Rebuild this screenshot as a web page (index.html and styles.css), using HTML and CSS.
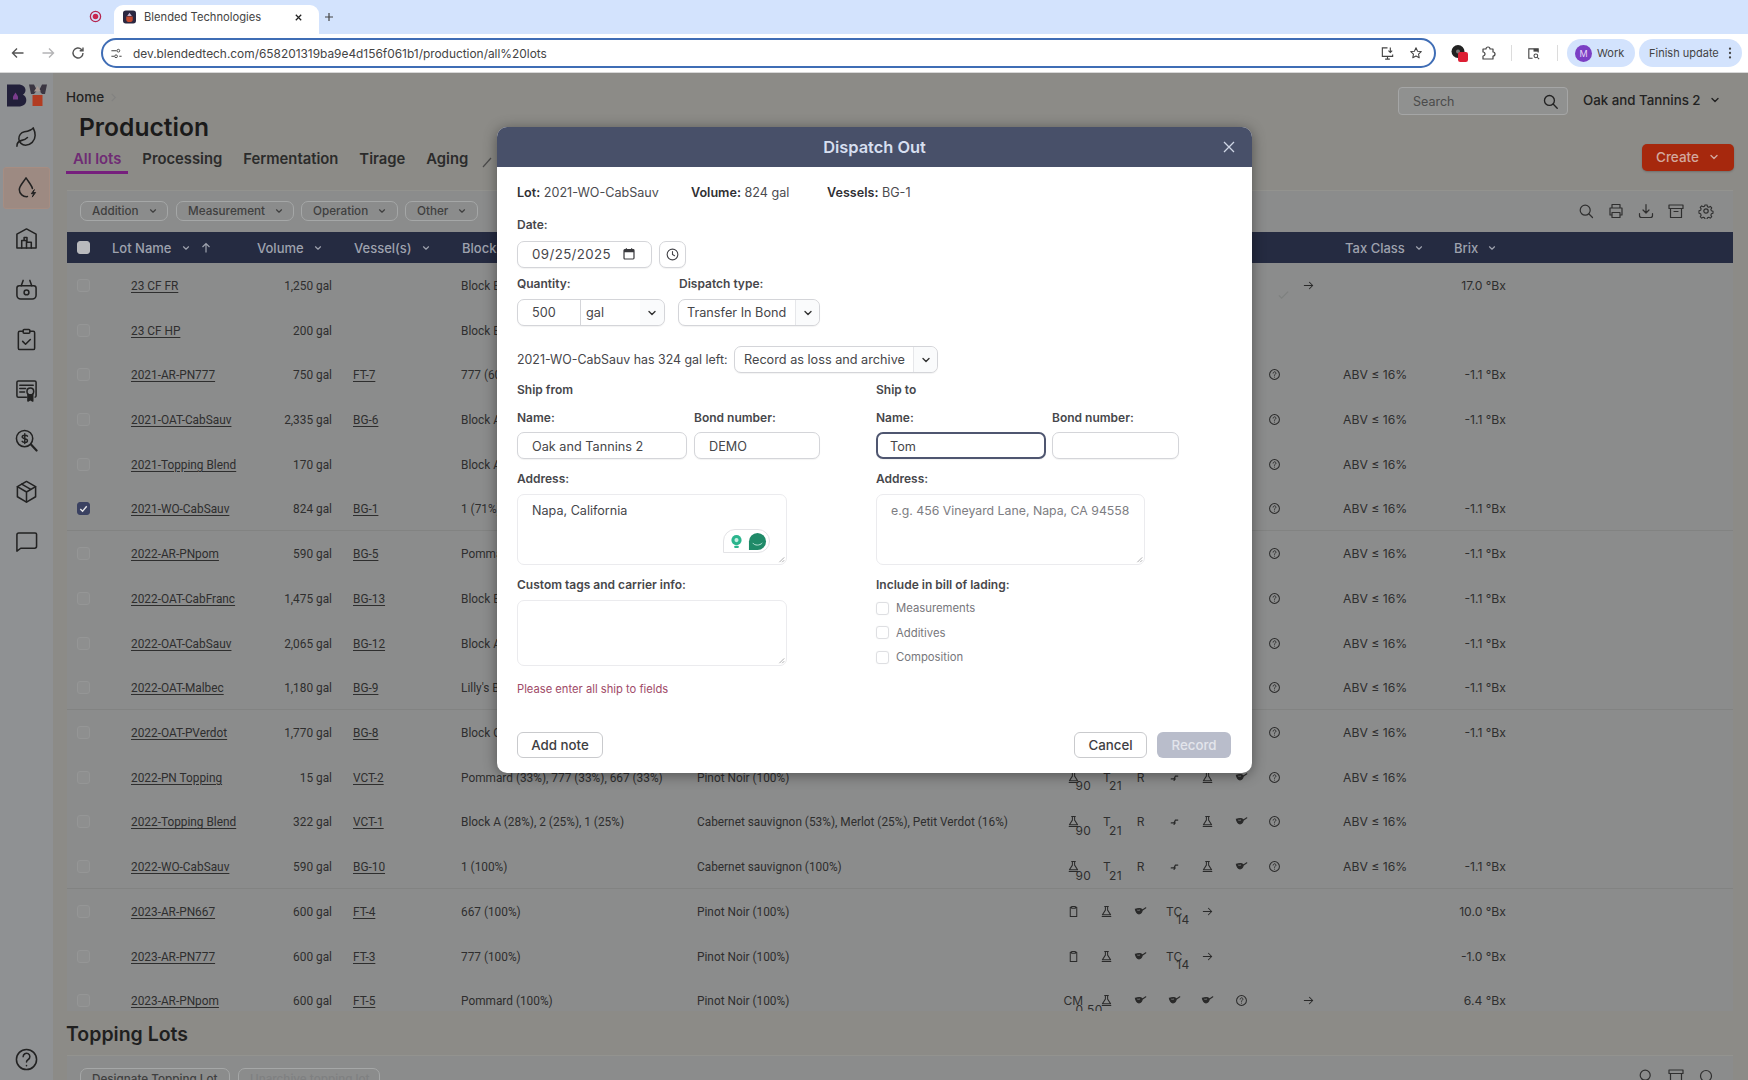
FILE: index.html
```html
<!DOCTYPE html>
<html lang="en">
<head>
<meta charset="utf-8">
<title>Blended Technologies</title>
<link rel="stylesheet" href="styles.css">
</head>
<body>
<svg class="defs" width="0" height="0" aria-hidden="true">
  <symbol id="i-chev" viewBox="0 0 12 12"><path d="M3 4.5 6 7.5 9 4.5" fill="none" stroke="currentColor" stroke-width="1.4" stroke-linecap="round" stroke-linejoin="round"/></symbol>
  <symbol id="i-flask" viewBox="0 0 14 14"><path d="M5 1.500h4M5.800 1.500v4L2.600 10.600h8.800L8.200 5.500v-4M2.300 12.500h9.400" fill="none" stroke="currentColor" stroke-width="1.100" stroke-linecap="round" stroke-linejoin="round"/></symbol>
  <symbol id="i-spoon" viewBox="0 0 14 14"><path d="M1.500 4.500c3-1 6-.8 7 .2 1 1.200-.4 4.300-2.500 4.800C3.600 10 2 7.300 1.500 4.500zM8.500 6l4.200-3" fill="currentColor" stroke="currentColor" stroke-width="1.200" stroke-linecap="round"/><path d="M3.500 5.600c1 .2 2.200.1 3-.2" fill="none" stroke="#8b8c8c" stroke-width=".8"/></symbol>
  <symbol id="i-help" viewBox="0 0 14 14"><circle cx="7" cy="7" r="5.300" fill="none" stroke="currentColor" stroke-width="1.100"/><path d="M5.500 5.500a1.500 1.500 0 1 1 2.300 1.300c-.5.300-.8.500-.8 1.100M7 9.800v.1" fill="none" stroke="currentColor" stroke-width="1" stroke-linecap="round"/></symbol>
  <symbol id="i-arrow" viewBox="0 0 14 14"><path d="M2.500 7h9M8 3.500 11.500 7 8 10.500" fill="none" stroke="currentColor" stroke-width="1.100" stroke-linecap="round" stroke-linejoin="round"/></symbol>
  <symbol id="i-clip" viewBox="0 0 14 14"><path d="M5 2.500H3.500v9.800h7V2.500H9M5 1.500h4v2H5z" fill="none" stroke="currentColor" stroke-width="1.100" stroke-linejoin="round"/></symbol>
  <symbol id="i-trans" viewBox="0 0 14 14"><path d="M3.500 8.500h3l1.500-3h2.500M6.500 10l1.300-1.500" fill="none" stroke="currentColor" stroke-width="1.300" stroke-linecap="round"/></symbol>
  <symbol id="i-search" viewBox="0 0 24 24"><circle cx="10.500" cy="10.500" r="7" fill="none" stroke="currentColor" stroke-width="1.900"/><path d="m16 16 5.500 5.500" stroke="currentColor" stroke-width="1.900" stroke-linecap="round"/></symbol>
  <symbol id="i-clock" viewBox="0 0 16 16"><circle cx="8" cy="8" r="5.700" fill="none" stroke="currentColor" stroke-width="1.200"/><path d="M8 4.800V8l2.200 1.300" fill="none" stroke="currentColor" stroke-width="1.200" stroke-linecap="round"/></symbol>
  <symbol id="i-cal" viewBox="0 0 16 16"><path d="M5 1.500v2M11 1.500v2" stroke="currentColor" stroke-width="1.400"/><rect x="2.300" y="3" width="11.400" height="10.700" rx="1" fill="none" stroke="currentColor" stroke-width="1.400"/><path d="M2.300 3h11.400v3H2.300z" fill="currentColor"/></symbol>
  <symbol id="i-resize" viewBox="0 0 10 10"><path d="M9 3 3 9M9 6.500 6.500 9" stroke="#8d8d90" stroke-width=".9"/></symbol>
</svg>

<header class="chrome">
  <div class="tabstrip">
    <svg class="rec" viewBox="0 0 14 14"><circle cx="7" cy="7" r="5.500" fill="none" stroke="#b5264f" stroke-width="1.400"/><circle cx="7" cy="7" r="3" fill="#c8264f"/></svg>
    <div class="tab">
      <svg class="favicon" viewBox="0 0 14 14"><rect width="14" height="14" rx="3" fill="#2a2740"/><path d="M7 2.500 9.500 6H4.500z" fill="#c9b8d6"/><path d="M3.500 6.500h7V10a3.500 2.500 0 0 1-7 0z" fill="#c4492f"/></svg>
      <span class="tab-title">Blended Technologies</span>
      <svg class="tab-x" viewBox="0 0 10 10"><path d="M2 2l6 6M8 2 2 8" stroke="#222" stroke-width="1.400"/></svg>
    </div>
    <svg class="tab-plus" viewBox="0 0 10 10"><path d="M5 1v8M1 5h8" stroke="#444" stroke-width="1.200"/></svg>
  </div>
  <div class="toolbar">
    <svg class="tb-nav" viewBox="0 0 16 16"><path d="M13.500 8h-11M7 3.500 2.500 8 7 12.500" fill="none" stroke="#555" stroke-width="1.400"/></svg>
    <svg class="tb-nav" viewBox="0 0 16 16"><path d="M2.500 8h11M9 3.500 13.500 8 9 12.500" fill="none" stroke="#b4b4b6" stroke-width="1.400"/></svg>
    <svg class="tb-nav" viewBox="0 0 16 16"><path d="M13 8a5 5 0 1 1-1.500-3.600L13 5.800M13 2.500v3.300H9.700" fill="none" stroke="#555" stroke-width="1.400"/></svg>
    <div class="urlbar">
      <svg class="tune" viewBox="0 0 14 14"><path d="M1.500 4H7M10 10h2.500M1.500 10h3" stroke="#444" stroke-width="1.100"/><circle cx="9" cy="4" r="1.500" fill="none" stroke="#444"/><circle cx="6.500" cy="10" r="1.500" fill="none" stroke="#444"/></svg>
      <span class="url">dev.blendedtech.com/658201319ba9e4d156f061b1/production/all%20lots</span>
      <svg class="url-ic1" viewBox="0 0 16 16"><path d="M8 2H2.500v9h11V9M5.500 14h5M8 11v3M11 1.500V7M9 5l2 2 2-2" fill="none" stroke="#444" stroke-width="1.200"/></svg>
      <svg class="url-ic2" viewBox="0 0 16 16"><path d="m8 2 1.800 3.900 4.200.5-3.100 2.900.8 4.200L8 11.400l-3.700 2.100.8-4.200L2 6.400l4.200-.5z" fill="none" stroke="#444" stroke-width="1.200" stroke-linejoin="round"/></svg>
    </div>
    <svg class="ext" viewBox="0 0 20 20"><circle cx="8" cy="8.500" r="6.500" fill="#222"/><circle cx="8" cy="8.500" r="2" fill="#777"/><rect x="8" y="9" width="10" height="10" rx="2.200" fill="#dd1f34"/></svg>
    <svg class="puzzle" viewBox="0 0 16 16"><path d="M3 4h3a2 2 0 1 1 4 0h3v3a2 2 0 1 1 0 4v3H3v-3a2 2 0 0 0 0-4z" fill="none" stroke="#444" stroke-width="1.200" stroke-linejoin="round"/></svg>
    <span class="tb-sep"></span>
    <svg class="pagesearch" viewBox="0 0 16 16"><path d="M7 13H3V3h10v4" fill="none" stroke="#444" stroke-width="1.200"/><path d="M8 3h5v3H8z" fill="#444"/><circle cx="10.500" cy="10.500" r="2" fill="none" stroke="#444" stroke-width="1.100"/><path d="m12 12 2 2" stroke="#444" stroke-width="1.100"/></svg>
    <span class="tb-sep"></span>
    <div class="pill pill-work"><span class="avatar">M</span><span>Work</span></div>
    <div class="pill pill-update"><span>Finish update</span><svg class="dots" viewBox="0 0 4 16"><circle cx="2" cy="3" r="1.300" fill="#444"/><circle cx="2" cy="8" r="1.300" fill="#444"/><circle cx="2" cy="13" r="1.300" fill="#444"/></svg></div>
  </div>
</header>

<div class="app">
  <nav class="sidebar">
    <svg class="logo" viewBox="0 0 40 23"><path d="M0 .5h11c5 0 7.500 2.500 7.500 5.500 0 2.300-1 3.800-2.700 4.700 2.200.8 3.500 2.700 3.500 5.300 0 4.300-3 6.500-8 6.500H0z" fill="#22203a"/><path d="M8.500 8.500 11 12.500v3H6v-3z" fill="#7a3c8c"/><path d="M22 .5h5l3 6-3 3.500h-3zM40 .5h-5l-3 6 3 3.500h3z" fill="#3b3642"/><path d="M27 7.500 30.500 2l3.500 5.500z" fill="#a89a94"/><path d="M25.500 11h10v11h-10z" fill="#b23c22"/></svg>
    <a class="nav"><svg class="nav-ic" viewBox="0 0 24 24"><path d="M11 20A7 7 0 0 1 9.800 6.100C15.500 5 17 4.480 19 2c1 2 2 4.180 2 8 0 5.500-4.780 10-10 10Z"/><path d="M2 21c0-3 1.850-5.360 5.080-6C9.500 14.520 12 13 13 12"/></svg></a>
    <a class="nav nav-active"><svg class="nav-ic" viewBox="0 0 24 24"><path d="M13 21.500a7.500 7.500 0 0 1-8.500-7.500C4.500 10.500 9 6 11.500 2c2.500 4 5.800 7.500 6.700 11"/><path d="m20 14.500-3 4h2.500l-1.500 3.500 3.500-4.800H19z" fill="#222" stroke-width="1"/></svg></a>
    <a class="nav"><svg class="nav-ic" viewBox="0 0 24 24"><path d="M2 22V7.500L12 2l10 5.500V22z"/><path d="M7 22v-8h5v8M12 22v-6h5v6M9.500 14v-3h3v5"/></svg></a>
    <a class="nav"><svg class="nav-ic" viewBox="0 0 24 24"><path d="M4.500 8h15A2.500 2.500 0 0 1 22 10.500V18a4 4 0 0 1-4 4H6a4 4 0 0 1-4-4v-7.500A2.500 2.500 0 0 1 4.500 8z"/><path d="m6.500 8 2-5.500M17.500 8l-2-5.500"/><circle cx="12" cy="15" r="2.500"/></svg></a>
    <a class="nav"><svg class="nav-ic" viewBox="0 0 24 24"><rect x="8.500" y="1.500" width="7" height="4" rx="1"/><path d="M15.500 3.500H19a1.500 1.500 0 0 1 1.500 1.500v16A1.500 1.500 0 0 1 19 22.500H5A1.500 1.500 0 0 1 3.500 21V5A1.500 1.500 0 0 1 5 3.500h3.500"/><path d="m8 14 3 3 5-5"/></svg></a>
    <a class="nav"><svg class="nav-ic" viewBox="0 0 24 24"><path d="M12 19H3.500A1.500 1.500 0 0 1 2 17.500v-14A1.500 1.500 0 0 1 3.500 2h17A1.500 1.500 0 0 1 22 3.500v14a1.500 1.500 0 0 1-1 1.400"/><path d="M5 6.500h14M5 10h6M5 13.500h5"/><circle cx="16" cy="13" r="3.500"/><path d="M13.500 16v7l2.500-1.500 2.500 1.500v-7" fill="#222"/></svg></a>
    <a class="nav"><svg class="nav-ic" viewBox="0 0 24 24"><circle cx="10" cy="10" r="8.500"/><path d="m16.500 16 6 6.500" stroke-width="2.200"/><path d="M13 7.500C12 6 7.500 6 7.500 8.200c0 2.800 5.500 1.200 5.500 4 0 2.300-4.500 2.200-5.500.6M10.200 4.800v10.400" stroke-width="1.500"/></svg></a>
    <a class="nav"><svg class="nav-ic" viewBox="0 0 24 24"><path d="M12 1.500 21.500 7v10.500L12 23l-9.500-5.500V7z"/><path d="M2.500 7 12 12.500 21.500 7M12 12.500V23M7 4.300l9.500 5.500"/></svg></a>
    <a class="nav"><svg class="nav-ic" viewBox="0 0 24 24"><path d="M2 21V4a2 2 0 0 1 2-2h17a1.500 1.500 0 0 1 1.500 1.500V16a2 2 0 0 1-2 2H6z"/></svg></a>
    <a class="nav nav-help"><svg class="nav-ic" viewBox="0 0 24 24"><circle cx="12" cy="12" r="10.500"/><path d="M8.500 9a3.500 3.500 0 1 1 5.300 3c-1.200.7-1.800 1.300-1.800 2.700M12 18.300v.2"/></svg></a>
  </nav>

  <main class="main">
    <div class="topbar">
      <span class="crumb">Home</span>
      <svg class="crumb-sep" viewBox="0 0 12 12"><path d="m4 2 4 4-4 4" fill="none" stroke="#828280" stroke-width="1.200"/></svg>
      <div class="search"><span>Search</span><svg class="search-ic"><use href="#i-search"/></svg></div>
      <div class="account"><span>Oak and Tannins 2</span><svg class="chev-m"><use href="#i-chev"/></svg></div>
    </div>
    <h1 class="title">Production</h1>
    <div class="tabs-row">
      <div class="tabs">
        <a class="ptab ptab-active">All lots</a>
        <a class="ptab">Processing</a>
        <a class="ptab">Fermentation</a>
        <a class="ptab">Tirage</a>
        <a class="ptab">Aging</a>
        <svg class="ptab-ic" viewBox="0 0 14 14"><path d="M1 13 9 4" stroke="#4a4a4a" stroke-width="1.200"/></svg>
      </div>
      <div class="create"><span>Create</span><svg class="chev-m"><use href="#i-chev"/></svg></div>
    </div>

    <section class="card">
      <div class="filters">
        <div class="filter-group">
          <div class="fbtn fbtn-add">Addition<svg class="chev-s"><use href="#i-chev"/></svg></div>
          <div class="fbtn fbtn-mea">Measurement<svg class="chev-s"><use href="#i-chev"/></svg></div>
          <div class="fbtn fbtn-ope">Operation<svg class="chev-s"><use href="#i-chev"/></svg></div>
          <div class="fbtn fbtn-oth">Other<svg class="chev-s"><use href="#i-chev"/></svg></div>
        </div>
        <div class="tools">
          <svg class="tool" viewBox="0 0 16 16"><circle cx="7.200" cy="7.200" r="5"/><path d="m11 11 3.500 3.500"/></svg>
          <svg class="tool" viewBox="0 0 16 16"><path d="M4 5V1.500h8V5M4 12H2V5h12v7h-2M4 9.500h8v5H4z"/></svg>
          <svg class="tool" viewBox="0 0 16 16"><path d="M8 1.500V10M5 7l3 3 3-3M1.500 10.500v2a2 2 0 0 0 2 2h9a2 2 0 0 0 2-2v-2"/></svg>
          <svg class="tool" viewBox="0 0 16 16"><path d="M1 2h14v3.500H1zM2.500 5.500v9h11v-9M6 8.500h4"/></svg>
          <svg class="tool" viewBox="0 0 16 16"><circle cx="8" cy="8" r="2.200"/><path d="M6.800 1.300h2.400l.4 1.900 1.500.7 1.700-1 1.600 1.700-1 1.600.6 1.600 1.800.5v2.300l-1.800.5-.6 1.500 1 1.700-1.600 1.600-1.700-1-1.500.6-.4 1.800H6.800l-.4-1.800-1.500-.6-1.700 1-1.600-1.600 1-1.700-.6-1.500-1.800-.5V7.700l1.800-.5.600-1.600-1-1.600 1.600-1.700 1.700 1 1.500-.7z" transform="translate(.8 .8) scale(.9)"/></svg>
        </div>
      </div>

      <div class="thead">
        <span class="cb cb-head"></span>
        <span class="th">Lot Name<svg class="chev-s"><use href="#i-chev"/></svg><svg class="sort" viewBox="0 0 12 12"><path d="M6 10.500v-9M2.500 5 6 1.500 9.500 5" fill="none" stroke="currentColor" stroke-width="1.200"/></svg></span>
        <span class="th">Volume<svg class="chev-s"><use href="#i-chev"/></svg></span>
        <span class="th">Vessel(s)<svg class="chev-s"><use href="#i-chev"/></svg></span>
        <span class="th">Block</span>
        <span class="th">Tax Class<svg class="chev-s"><use href="#i-chev"/></svg></span>
        <span class="th">Brix<svg class="chev-s"><use href="#i-chev"/></svg></span>
      </div>

      <div class="tbody">
        <div class="row">
          <span class="cb"></span><a class="lnk">23 CF FR</a><span class="vol">1,250 gal</span><span class="ves"></span><span class="txt">Block B (100%)</span><span class="txt">Cabernet franc (100%)</span>
          <div class="ics"><span class="c c-skip6"><svg class="done" viewBox="0 0 14 14"><path d="m2 8 3 3 7-7" fill="none" stroke="#7e807f" stroke-width="1.200"/></svg></span><span class="c"><svg class="ri"><use href="#i-arrow"/></svg></span></div>
          <span class="tax"></span><span class="brix">17.0 °Bx</span>
        </div>
        <div class="row">
          <span class="cb"></span><a class="lnk">23 CF HP</a><span class="vol">200 gal</span><span class="ves"></span><span class="txt">Block B (100%)</span><span class="txt">Cabernet franc (100%)</span>
          <div class="ics"></div><span class="tax"></span><span class="brix"></span>
        </div>
        <div class="row">
          <span class="cb"></span><a class="lnk">2021-AR-PN777</a><span class="vol">750 gal</span><span class="ves"><a class="lnk">FT-7</a></span><span class="txt">777 (60%)</span><span class="txt">Pinot Noir (100%)</span>
          <div class="ics"><span class="c c-skip6"><svg class="ri"><use href="#i-help"/></svg></span></div><span class="tax">ABV ≤ 16%</span><span class="brix">-1.1 °Bx</span>
        </div>
        <div class="row">
          <span class="cb"></span><a class="lnk">2021-OAT-CabSauv</a><span class="vol">2,335 gal</span><span class="ves"><a class="lnk">BG-6</a></span><span class="txt">Block A (100%)</span><span class="txt">Cabernet sauvignon (100%)</span>
          <div class="ics"><span class="c c-skip6"><svg class="ri"><use href="#i-help"/></svg></span></div><span class="tax">ABV ≤ 16%</span><span class="brix">-1.1 °Bx</span>
        </div>
        <div class="row">
          <span class="cb"></span><a class="lnk">2021-Topping Blend</a><span class="vol">170 gal</span><span class="ves"></span><span class="txt">Block A (60%)</span><span class="txt">Cabernet sauvignon (60%)</span>
          <div class="ics"><span class="c c-skip6"><svg class="ri"><use href="#i-help"/></svg></span></div><span class="tax">ABV ≤ 16%</span><span class="brix"></span>
        </div>
        <div class="row row-end">
          <span class="cb cb-on"><svg viewBox="0 0 12 12"><path d="m2.500 6.500 2.500 2.500 4.500-5.500" fill="none" stroke="#e8e8ea" stroke-width="1.500"/></svg></span><a class="lnk">2021-WO-CabSauv</a><span class="vol">824 gal</span><span class="ves"><a class="lnk">BG-1</a></span><span class="txt">1 (71%)</span><span class="txt">Cabernet sauvignon (100%)</span>
          <div class="ics"><span class="c c-skip6"><svg class="ri"><use href="#i-help"/></svg></span></div><span class="tax">ABV ≤ 16%</span><span class="brix">-1.1 °Bx</span>
        </div>
        <div class="row">
          <span class="cb"></span><a class="lnk">2022-AR-PNpom</a><span class="vol">590 gal</span><span class="ves"><a class="lnk">BG-5</a></span><span class="txt">Pommard (100%)</span><span class="txt">Pinot Noir (100%)</span>
          <div class="ics"><span class="c c-skip6"><svg class="ri"><use href="#i-help"/></svg></span></div><span class="tax">ABV ≤ 16%</span><span class="brix">-1.1 °Bx</span>
        </div>
        <div class="row">
          <span class="cb"></span><a class="lnk">2022-OAT-CabFranc</a><span class="vol">1,475 gal</span><span class="ves"><a class="lnk">BG-13</a></span><span class="txt">Block B (100%)</span><span class="txt">Cabernet franc (100%)</span>
          <div class="ics"><span class="c c-skip6"><svg class="ri"><use href="#i-help"/></svg></span></div><span class="tax">ABV ≤ 16%</span><span class="brix">-1.1 °Bx</span>
        </div>
        <div class="row">
          <span class="cb"></span><a class="lnk">2022-OAT-CabSauv</a><span class="vol">2,065 gal</span><span class="ves"><a class="lnk">BG-12</a></span><span class="txt">Block A (100%)</span><span class="txt">Cabernet sauvignon (100%)</span>
          <div class="ics"><span class="c c-skip6"><svg class="ri"><use href="#i-help"/></svg></span></div><span class="tax">ABV ≤ 16%</span><span class="brix">-1.1 °Bx</span>
        </div>
        <div class="row row-end">
          <span class="cb"></span><a class="lnk">2022-OAT-Malbec</a><span class="vol">1,180 gal</span><span class="ves"><a class="lnk">BG-9</a></span><span class="txt">Lilly's Block (100%)</span><span class="txt">Malbec (100%)</span>
          <div class="ics"><span class="c c-skip6"><svg class="ri"><use href="#i-help"/></svg></span></div><span class="tax">ABV ≤ 16%</span><span class="brix">-1.1 °Bx</span>
        </div>
        <div class="row">
          <span class="cb"></span><a class="lnk">2022-OAT-PVerdot</a><span class="vol">1,770 gal</span><span class="ves"><a class="lnk">BG-8</a></span><span class="txt">Block C (100%)</span><span class="txt">Petit Verdot (100%)</span>
          <div class="ics"><span class="c c-skip6"><svg class="ri"><use href="#i-help"/></svg></span></div><span class="tax">ABV ≤ 16%</span><span class="brix">-1.1 °Bx</span>
        </div>
        <div class="row">
          <span class="cb"></span><a class="lnk">2022-PN Topping</a><span class="vol">15 gal</span><span class="ves"><a class="lnk">VCT-2</a></span><span class="txt">Pommard (33%), 777 (33%), 667 (33%)</span><span class="txt">Pinot Noir (100%)</span>
          <div class="ics"><span class="c"><svg class="ri"><use href="#i-flask"/></svg><b class="sub">90</b></span><span class="c"><span class="ct">T</span><b class="sub">21</b></span><span class="c"><span class="ct">R</span></span><span class="c"><svg class="ri"><use href="#i-trans"/></svg></span><span class="c"><svg class="ri"><use href="#i-flask"/></svg></span><span class="c"><svg class="ri"><use href="#i-spoon"/></svg></span><span class="c"><svg class="ri"><use href="#i-help"/></svg></span></div>
          <span class="tax">ABV ≤ 16%</span><span class="brix"></span>
        </div>
        <div class="row">
          <span class="cb"></span><a class="lnk">2022-Topping Blend</a><span class="vol">322 gal</span><span class="ves"><a class="lnk">VCT-1</a></span><span class="txt">Block A (28%), 2 (25%), 1 (25%)</span><span class="txt">Cabernet sauvignon (53%), Merlot (25%), Petit Verdot (16%)</span>
          <div class="ics"><span class="c"><svg class="ri"><use href="#i-flask"/></svg><b class="sub">90</b></span><span class="c"><span class="ct">T</span><b class="sub">21</b></span><span class="c"><span class="ct">R</span></span><span class="c"><svg class="ri"><use href="#i-trans"/></svg></span><span class="c"><svg class="ri"><use href="#i-flask"/></svg></span><span class="c"><svg class="ri"><use href="#i-spoon"/></svg></span><span class="c"><svg class="ri"><use href="#i-help"/></svg></span></div>
          <span class="tax">ABV ≤ 16%</span><span class="brix"></span>
        </div>
        <div class="row row-end">
          <span class="cb"></span><a class="lnk">2022-WO-CabSauv</a><span class="vol">590 gal</span><span class="ves"><a class="lnk">BG-10</a></span><span class="txt">1 (100%)</span><span class="txt">Cabernet sauvignon (100%)</span>
          <div class="ics"><span class="c"><svg class="ri"><use href="#i-flask"/></svg><b class="sub">90</b></span><span class="c"><span class="ct">T</span><b class="sub">21</b></span><span class="c"><span class="ct">R</span></span><span class="c"><svg class="ri"><use href="#i-trans"/></svg></span><span class="c"><svg class="ri"><use href="#i-flask"/></svg></span><span class="c"><svg class="ri"><use href="#i-spoon"/></svg></span><span class="c"><svg class="ri"><use href="#i-help"/></svg></span></div>
          <span class="tax">ABV ≤ 16%</span><span class="brix">-1.1 °Bx</span>
        </div>
        <div class="row">
          <span class="cb"></span><a class="lnk">2023-AR-PN667</a><span class="vol">600 gal</span><span class="ves"><a class="lnk">FT-4</a></span><span class="txt">667 (100%)</span><span class="txt">Pinot Noir (100%)</span>
          <div class="ics"><span class="c"><svg class="ri"><use href="#i-clip"/></svg></span><span class="c"><svg class="ri"><use href="#i-flask"/></svg></span><span class="c"><svg class="ri"><use href="#i-spoon"/></svg></span><span class="c"><span class="ct">TC</span><b class="sub">14</b></span><span class="c"><svg class="ri"><use href="#i-arrow"/></svg></span></div>
          <span class="tax"></span><span class="brix">10.0 °Bx</span>
        </div>
        <div class="row">
          <span class="cb"></span><a class="lnk">2023-AR-PN777</a><span class="vol">600 gal</span><span class="ves"><a class="lnk">FT-3</a></span><span class="txt">777 (100%)</span><span class="txt">Pinot Noir (100%)</span>
          <div class="ics"><span class="c"><svg class="ri"><use href="#i-clip"/></svg></span><span class="c"><svg class="ri"><use href="#i-flask"/></svg></span><span class="c"><svg class="ri"><use href="#i-spoon"/></svg></span><span class="c"><span class="ct">TC</span><b class="sub">14</b></span><span class="c"><svg class="ri"><use href="#i-arrow"/></svg></span></div>
          <span class="tax"></span><span class="brix">-1.0 °Bx</span>
        </div>
        <div class="row">
          <span class="cb"></span><a class="lnk">2023-AR-PNpom</a><span class="vol">600 gal</span><span class="ves"><a class="lnk">FT-5</a></span><span class="txt">Pommard (100%)</span><span class="txt">Pinot Noir (100%)</span>
          <div class="ics"><span class="c"><span class="ct">CM</span><b class="sub">0.50</b></span><span class="c"><svg class="ri"><use href="#i-flask"/></svg></span><span class="c"><svg class="ri"><use href="#i-spoon"/></svg></span><span class="c"><svg class="ri"><use href="#i-spoon"/></svg></span><span class="c"><svg class="ri"><use href="#i-spoon"/></svg></span><span class="c"><svg class="ri"><use href="#i-help"/></svg></span><span class="c"></span><span class="c"><svg class="ri"><use href="#i-arrow"/></svg></span></div>
          <span class="tax"></span><span class="brix">6.4 °Bx</span>
        </div>
      </div>
    </section>

    <h2 class="subhead">Topping Lots</h2>
    <section class="card card-low">
      <div class="filter-group">
        <div class="fbtn fbtn-des">Designate Topping Lot</div>
        <div class="fbtn fbtn-una">Unarchive topping lot</div>
      </div>
      <div class="tools">
        <svg class="tool" viewBox="0 0 16 16"><circle cx="7.200" cy="7.200" r="5"/></svg>
        <svg class="tool" viewBox="0 0 16 16"><path d="M1 2h14v3.500H1zM2.500 5.500v9h11v-9"/></svg>
        <svg class="tool" viewBox="0 0 16 16"><circle cx="8" cy="8" r="5.500"/></svg>
      </div>
    </section>
  </main>
</div>

<div class="dialog" role="dialog">
  <div class="dlg-head">
    <span class="dlg-title">Dispatch Out</span>
    <svg class="dlg-x" viewBox="0 0 12 12"><path d="M1 1l10 10M11 1 1 11" stroke="#cfd6e6" stroke-width="1.300"/></svg>
  </div>
  <div class="dlg-body">
    <div class="info">
      <span class="info-lot"><b>Lot:</b> 2021-WO-CabSauv</span>
      <span class="info-vol"><b>Volume:</b> 824 gal</span>
      <span><b>Vessels:</b> BG-1</span>
    </div>
    <div class="lbl lbl-date">Date:</div>
    <div class="ctl-row">
      <div class="field f-date"><span>09/25/2025</span><svg class="cal"><use href="#i-cal"/></svg></div>
      <div class="field f-clock"><svg class="clock"><use href="#i-clock"/></svg></div>
    </div>
    <div class="qty-labels"><span class="lbl lbl-qty">Quantity:</span><span class="lbl">Dispatch type:</span></div>
    <div class="ctl-row ctl-row-qty">
      <div class="field f-qty"><span class="qty-num">500</span><span class="qty-unit">gal</span><span class="sel-arrow sel-arrow-bare"><svg class="chev-m"><use href="#i-chev"/></svg></span></div>
      <div class="field f-type"><span class="sel-text">Transfer In Bond</span><span class="sel-arrow"><svg class="chev-m"><use href="#i-chev"/></svg></span></div>
    </div>
    <div class="left-row">
      <span class="left-text">2021-WO-CabSauv has 324 gal left:</span>
      <div class="field f-left"><span class="sel-text">Record as loss and archive</span><span class="sel-arrow"><svg class="chev-m"><use href="#i-chev"/></svg></span></div>
    </div>
    <div class="ship">
      <div class="ship-col">
        <div class="lbl lbl-ship">Ship from</div>
        <div class="pair-labels"><span class="lbl lbl-name">Name:</span><span class="lbl">Bond number:</span></div>
        <div class="pair">
          <div class="field f-name"><span>Oak and Tannins 2</span></div>
          <div class="field f-bond"><span>DEMO</span></div>
        </div>
        <div class="lbl lbl-addr">Address:</div>
        <div class="area area-addr">
          <span>Napa, California</span>
          <div class="gram">
            <svg class="gram-bulb" viewBox="0 0 14 16"><circle cx="7" cy="6.500" r="5.500" fill="#2bb58d"/><circle cx="7" cy="6.500" r="2.200" fill="#c5f0e2"/><rect x="4.500" y="12.500" width="5" height="2.500" rx="1" fill="#2bb58d"/></svg>
            <svg class="gram-g" viewBox="0 0 20 20"><path d="M10 1a9 9 0 0 1 0 18H1v-9a9 9 0 0 1 9-9z" fill="#1f8a68"/><path d="M5 11.500c2 3 7.500 3 10 0" fill="none" stroke="#bfe8da" stroke-width="1"/></svg>
          </div>
          <svg class="grip"><use href="#i-resize"/></svg>
        </div>
        <div class="lbl lbl-tags">Custom tags and carrier info:</div>
        <div class="area area-tags"><svg class="grip"><use href="#i-resize"/></svg></div>
      </div>
      <div class="ship-col">
        <div class="lbl lbl-ship">Ship to</div>
        <div class="pair-labels"><span class="lbl lbl-name lbl-name-r">Name:</span><span class="lbl">Bond number:</span></div>
        <div class="pair">
          <div class="field f-name f-focus"><span>Tom</span></div>
          <div class="field f-bond f-bond-r"></div>
        </div>
        <div class="lbl lbl-addr">Address:</div>
        <div class="area area-addr area-r">
          <span class="ph">e.g. 456 Vineyard Lane, Napa, CA 94558</span>
          <svg class="grip"><use href="#i-resize"/></svg>
        </div>
        <div class="lbl lbl-tags">Include in bill of lading:</div>
        <div class="checks">
          <div class="check"><span class="box"></span>Measurements</div>
          <div class="check"><span class="box"></span>Additives</div>
          <div class="check"><span class="box"></span>Composition</div>
        </div>
      </div>
    </div>
    <div class="err">Please enter all ship to fields</div>
    <div class="dlg-foot">
      <div class="btn btn-note">Add note</div>
      <div class="btn btn-cancel">Cancel</div>
      <div class="btn btn-record">Record</div>
    </div>
  </div>
</div>
</body>
</html>
```

FILE: styles.css
```css
* { box-sizing: border-box; }
html, body { margin: 0; padding: 0; }
body {
  position: relative;
  width: 1748px;
  height: 1080px;
  overflow: hidden;
  font-family: Inter, "Liberation Sans", sans-serif;
  background: #8c8b87;
  color: #2b2b2b;
}
svg { display: block; flex: none; }
.defs { position: absolute; }

/* browser chrome */
.chrome { height: 73px; }
.tabstrip {
  height: 34px;
  background: #d3e3fd;
  display: flex;
  align-items: flex-end;
  padding-left: 89px;
}
.rec { width: 13px; height: 13px; margin-bottom: 11px; margin-right: 12px; }
.tab {
  width: 205px;
  height: 29px;
  background: #fff;
  border-radius: 9px 9px 0 0;
  display: flex;
  align-items: center;
  padding: 0 0 5px 9px;
}
.favicon { width: 13px; height: 14px; }
.tab-title { font-size: 11.200px; color: #444; margin-left: 8px; width: 150px; white-space: nowrap; }
.tab-x { width: 9px; height: 9px; }
.tab-plus { width: 10px; height: 10px; margin: 0 0 12px 5px; }
.toolbar {
  height: 39px;
  background: #fff;
  display: flex;
  align-items: center;
  padding-left: 10px;
  border-bottom: 1px solid #d8d8d8;
}
.tb-nav { width: 16px; height: 16px; margin-right: 14px; }
.urlbar {
  width: 1335px;
  height: 30px;
  margin-left: 1px;
  border: 2px solid #3f6db5;
  border-radius: 15px;
  display: flex;
  align-items: center;
  padding-left: 7px;
}
.tune { width: 13px; height: 13px; }
.url { font-size: 11.900px; color: #444; margin-left: 10px; white-space: nowrap; width: 1232px; }
.url-ic1 { width: 15px; height: 15px; margin-left: 15px; }
.url-ic2 { width: 14px; height: 14px; margin-left: 14px; }
.ext { width: 20px; height: 20px; margin-left: 14px; }
.puzzle { width: 16px; height: 16px; margin-left: 10px; }
.tb-sep { width: 1px; height: 16px; background: #dcdcdc; margin-left: 15px; }
.pagesearch { width: 15px; height: 15px; margin-left: 14px; }
.tb-sep + .pagesearch + .tb-sep { margin-left: 16px; }
.pill {
  height: 28px;
  border-radius: 14px;
  background: #d3e3fd;
  display: flex;
  align-items: center;
  font-size: 11px;
  color: #444;
  white-space: nowrap;
}
.pill-work { width: 68px; margin-left: 9px; padding-left: 8px; gap: 5px; }
.avatar {
  width: 17px; height: 17px; border-radius: 50%;
  background: #7b3fc4; color: #e5d7f7;
  font-size: 9px; display: flex; align-items: center; justify-content: center;
}
.pill-update { width: 103px; margin-left: 4px; padding-left: 10px; }
.dots { width: 4px; height: 14px; margin-left: 9px; }

/* app shell */
.app { display: flex; height: 1007px; }
.sidebar {
  width: 53px;
  background: #8f9193;
  display: flex;
  flex-direction: column;
  align-items: center;
  padding-bottom: 9px;
  flex: none;
}
.logo { width: 40px; height: 23px; margin-top: 11px; margin-bottom: 5px; }
.nav { height: 50.600px; width: 100%; display: flex; align-items: center; justify-content: center; flex: none; }
.nav-ic { width: 23px; height: 23px; fill: none; stroke: #222; stroke-width: 1.600; stroke-linecap: round; stroke-linejoin: round; }
.nav-active { position: relative; }
.nav-active::before {
  content: "";
  position: absolute;
  left: 3px; right: 3px; top: 4px; bottom: 4px;
  background: #9d8a82;
  border: 1px solid #a68d82;
  border-radius: 3px;
}
.nav-active .nav-ic { position: relative; }
.nav-help { margin-top: auto; height: 24px; }
.main { flex: 1; min-width: 0; padding-left: 13px; padding-right: 15px; }

.topbar { display: flex; height: 39px; align-items: flex-start; }
.crumb { font-size: 13.500px; font-weight: 500; line-height: 18px; margin-top: 15px; color: #222; }
.crumb-sep { width: 11px; height: 11px; margin: 19px 0 0 4px; }
.search {
  margin-left: auto;
  margin-top: 14px;
  width: 170px;
  height: 28px;
  border: 1px solid #a5a6a6;
  border-radius: 4px;
  background: #909190;
  display: flex;
  align-items: center;
  padding-left: 14px;
  font-size: 12.500px;
  color: #4b4b4b;
}
.search-ic { width: 17px; height: 17px; margin-left: auto; margin-right: 8px; color: #222; }
.account { margin-top: 18px; margin-left: 15px; display: flex; align-items: center; font-size: 13.300px; font-weight: 500; line-height: 18px; width: 150px; color: #222; white-space: nowrap; }
.chev-m { width: 12px; height: 12px; margin-left: 8px; }
.title { margin: 0 0 0 13px; font-size: 24.600px; font-weight: 600; line-height: 30px; color: #1a1a1a; height: 32px; }
.tabs-row { display: flex; height: 30px; justify-content: space-between; }
.tabs { display: flex; gap: 7px; align-items: flex-start; }
.ptab { font-size: 14.800px; font-weight: 600; line-height: 18px; padding: 6px 7px 3px; height: 30px; color: #2b2b2b; white-space: nowrap; }
.ptab-active { color: #6f2c74; border-bottom: 3px solid #761f7d; }
.ptab-ic { width: 14px; height: 14px; margin-top: 10px; }
.create {
  width: 92px; height: 27px;
  background: #a6280d;
  border-radius: 5px;
  color: #d3a89e;
  font-size: 13.500px;
  font-weight: 500;
  display: flex; align-items: center; justify-content: center;
  box-shadow: 0 1px 2px rgba(0,0,0,.2);
  margin-right: -1px;
  padding-bottom: 1px;
}
.create .chev-m { margin-left: 9px; }

.card { margin: 16px 0 0 1px; background: #8b8c8c; border-top: 1px solid #93938f; }
.filters { height: 41px; display: flex; justify-content: space-between; align-items: center; padding: 0 19px 1px 13px; }
.filter-group { display: flex; gap: 8px; }
.fbtn {
  height: 20px;
  border: 1px solid #a5a7a7;
  border-radius: 7px;
  font-size: 11.700px;
  font-weight: 500;
  color: #3f3f3f;
  display: flex;
  align-items: center;
  padding-left: 11px;
  white-space: nowrap;
}
.fbtn-add { width: 88px; }
.fbtn-mea { width: 118px; margin-right: -1px; }
.fbtn-ope { width: 97px; }
.fbtn-oth { width: 73px; margin-left: -1px; }
.chev-s { width: 10px; height: 10px; margin-left: 9px; }
.tools { display: flex; gap: 14px; }
.tool { width: 16px; height: 16px; fill: none; stroke: #2f2f2f; stroke-width: 1.200; stroke-linejoin: round; stroke-linecap: round; }

.thead {
  height: 31px;
  background: #252b41;
  color: #9ea2ae;
  display: grid;
  grid-template-columns: 45px 145px 97px 108px 883px 109px 1fr;
  align-items: center;
  font-size: 13px;
  font-weight: 500;
}
.th { display: flex; align-items: center; white-space: nowrap; }
.sort { width: 12px; height: 12px; margin-left: 9px; }
.cb {
  width: 13px; height: 13px;
  border: 1px solid #959696;
  border-radius: 3px;
  margin-left: 10px;
  background: #8e8f8f;
  display: block;
}
.cb-head { background: #b9babd; border-color: #b9babd; }
.cb-on { background: #3a4161; border-color: #3a4161; }
.tbody { height: 748px; overflow: hidden; }
.row {
  height: 44.730px;
  display: grid;
  grid-template-columns: 64px 110px 91px 129px 236px 359px 269px 128px 53px;
  align-items: center;
  font-family: Roboto, "Liberation Sans", sans-serif;
  font-size: 11.850px;
  color: #2e2e2e;
  white-space: nowrap;
}
.row > .lnk, .vol, .ves, .txt { padding-top: 1px; }
.row-end { box-shadow: inset 0 -1px 0 #828382; }
.lnk { text-decoration: underline; text-underline-offset: 2px; color: #2e2e2e; }
.vol { text-align: right; }
.ves { padding-left: 21px; }
.txt { overflow: hidden; }
.ics { display: flex; align-items: center; padding-left: .6px; font-family: Inter, "Liberation Sans", sans-serif; }
.c { width: 33.600px; height: 24px; position: relative; display: flex; align-items: center; justify-content: center; flex: none; }
.c-skip6 { margin-left: 201.600px; }
.ri { width: 13px; height: 13px; color: #2a2a2a; }
.ct { font-size: 12px; }
.sub { position: absolute; left: 50%; top: 50%; margin-left: 2px; margin-top: 1px; font-size: 12px; font-weight: 400; letter-spacing: .5px; }
.done { width: 13px; height: 13px; position: absolute; left: 19px; top: 15px; }
.tax, .brix { font-family: Inter, "Liberation Sans", sans-serif; font-size: 12.200px; }
.tax { padding-left: 18px; }
.brix { text-align: right; }

.subhead { margin: 11px 0 0; font-size: 19.500px; font-weight: 600; line-height: 24px; color: #1f1f1f; height: 24px; }
.card-low { margin-top: 9px; height: 60px; display: flex; justify-content: space-between; padding: 12px 19px 0 13px; }
.card-low .fbtn { height: 22px; padding-left: 11px; }
.fbtn-des { width: 150px; }
.fbtn-una { width: 142px; color: #7f8081; }

/* dialog */
.dialog {
  position: absolute;
  left: 497px;
  top: 127px;
  width: 755px;
  height: 646px;
  background: #fff;
  border-radius: 10px;
  box-shadow: 0 2px 14px rgba(0,0,0,.42);
  display: flex;
  flex-direction: column;
  overflow: hidden;
}
.dlg-head {
  height: 40px;
  background: #485069;
  display: flex;
  align-items: center;
  justify-content: center;
  position: relative;
  flex: none;
}
.dlg-title { color: #d7dff0; font-size: 16.400px; font-weight: 600; }
.dlg-x { position: absolute; right: 17px; top: 14px; width: 12px; height: 12px; }
.dlg-body { flex: 1; display: flex; flex-direction: column; padding: 17px 20px 15px; }
.info { display: flex; font-size: 12.600px; line-height: 18px; color: #4b4b4f; }
.info b { font-weight: 600; color: #2f2f33; }
.info-lot { width: 174px; }
.info-vol { width: 136px; }
.lbl { font-size: 12px; font-weight: 600; line-height: 16px; color: #47474b; display: block; white-space: nowrap; }
.lbl-date { margin-top: 15px; }
.ctl-row { display: flex; gap: 7px; margin-top: 8px; }
.field {
  height: 27px;
  border: 1px solid #d4d5d9;
  border-radius: 7px;
  background: #fff;
  display: flex;
  align-items: center;
  font-size: 12.700px;
  color: #46464a;
  box-shadow: 0 1px 1px rgba(0,0,0,.05);
  white-space: nowrap;
}
.f-date { width: 135px; padding-left: 14px; padding-bottom: 1px; font-size: 13.300px; letter-spacing: .4px; }
.cal { width: 14px; height: 14px; margin-left: auto; margin-right: 15px; color: #3a3a3e; }
.f-clock { width: 27px; justify-content: center; }
.clock { width: 15px; height: 15px; color: #45454a; }
.qty-labels { display: flex; margin-top: 8px; }
.lbl-qty { width: 162px; }
.ctl-row-qty { gap: 13px; margin-top: 7px; }
.f-qty { width: 148px; overflow: hidden; }
.qty-num { width: 63px; padding-left: 14px; border-right: 1px solid #d4d5d9; height: 100%; display: flex; align-items: center; flex: none; }
.qty-unit { padding-left: 5px; flex: 1; }
.sel-arrow { width: 24px; height: 100%; display: flex; align-items: center; justify-content: center; background: #fafbfc; border-left: 1px solid #e6e7ea; flex: none; color: #333; border-radius: 0 7px 7px 0; }
.sel-arrow .chev-m { margin: 0; }
.sel-arrow-bare { border-left: none; }
.f-type { width: 142px; padding-left: 8px; }
.f-type .sel-text { flex: 1; }
.left-row { display: flex; align-items: center; margin-top: 20px; height: 27px; }
.left-text { font-size: 12.400px; color: #46464a; width: 217px; white-space: nowrap; }
.f-left { width: 204px; padding-left: 9px; }
.f-left .sel-text { flex: 1; }
.ship { display: grid; grid-template-columns: 359px 1fr; margin-top: 9px; }
.lbl-name { width: 177px; }
.lbl-name-r { width: 176px; }
.pair-labels { display: flex; margin-top: 12px; }
.pair { display: flex; gap: 7px; margin-top: 6px; }
.f-name { width: 170px; padding-left: 14px; padding-top: 1px; }
.f-bond { width: 126px; padding-left: 14px; padding-top: 1px; }
.f-bond-r { width: 127px; margin-left: -1px; }
.f-focus { border: 2px solid #4f5670; padding-left: 12px; }
.lbl-addr { margin-top: 12px; }
.area {
  position: relative;
  border: 1px solid #ebebee;
  border-radius: 7px;
  width: 270px;
  font-size: 12.600px;
  color: #46464a;
  padding: 8px 14px;
  line-height: 16px;
  white-space: nowrap;
}
.area-addr { height: 71px; margin-top: 7px; }
.area-r { width: 269px; }
.area-tags { height: 66px; margin-top: 7px; }
.lbl-tags { margin-top: 12px; }
.ph { color: #7d7d82; font-size: 12.300px; }
.grip { position: absolute; right: 1px; bottom: 1px; width: 8px; height: 8px; }
.gram {
  position: absolute;
  left: 205px;
  top: 34px;
  width: 47px;
  height: 24px;
  border: 1px solid #e3e3e6;
  border-radius: 12px 12px 12px 0;
  display: flex;
  align-items: center;
  padding-left: 6px;
  gap: 5px;
  background: #fff;
}
.gram-bulb { width: 13px; height: 15px; }
.gram-g { width: 19px; height: 19px; }
.checks { margin-top: 3px; }
.check { height: 24.500px; display: flex; align-items: center; font-size: 11.300px; color: #77777c; }
.box { width: 13px; height: 13px; border: 1px solid #dedfe2; border-radius: 3px; margin-right: 7px; box-shadow: 0 0 1px rgba(0,0,0,.1); }
.err { margin-top: 11px; font-size: 11.200px; line-height: 16px; color: #a04a68; }
.dlg-foot { margin-top: auto; display: flex; align-items: center; }
.btn {
  height: 26px;
  border-radius: 6px;
  font-size: 13.300px;
  font-weight: 500;
  display: flex;
  align-items: center;
  justify-content: center;
}
.btn-note { width: 86px; border: 1px solid #c9cacd; color: #3e3e42; margin-right: auto; }
.btn-cancel { width: 73px; border: 1px solid #c9cacd; color: #3e3e42; margin-right: 10px; }
.btn-record { width: 74px; background: #b9bdcb; color: #e3e5ec; margin-right: 1px; }
```
